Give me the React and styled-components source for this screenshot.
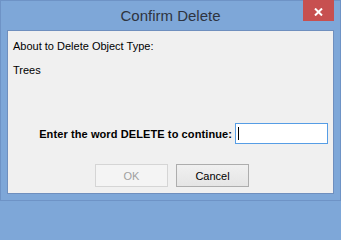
import React from 'react'
import styled, { createGlobalStyle } from 'styled-components'

const GlobalStyle = createGlobalStyle`
  html, body {
    margin: 0;
    padding: 0;
    background: #7ea7d8;
  }
  * {
    box-sizing: border-box;
  }
`

export default function App() {
  return (
    <>
      <GlobalStyle />
      <Window>
        <TitleBar>
          <Title>Confirm Delete</Title>
          <CloseButton>
            <svg width="9" height="8" viewBox="0 0 9 8">
              <path d="M1 0.5 L8 7.5 M8 0.5 L1 7.5" stroke="#ffffff" strokeWidth="2" />
            </svg>
          </CloseButton>
        </TitleBar>
        <Client>
          <Text>About to Delete Object Type:</Text>
          <Text $top={11}>Trees</Text>
          <ConfirmRow>
            <Label>Enter the word DELETE to continue:</Label>
            <InputBox>
              <Caret />
            </InputBox>
          </ConfirmRow>
          <ButtonRow>
            <Button disabled>OK</Button>
            <Button>Cancel</Button>
          </ButtonRow>
        </Client>
      </Window>
    </>
  )
}

const Window = styled.div`
  width: 341px;
  height: 201px;
  display: flex;
  flex-direction: column;
  background: #7ea7d8;
  border: 1px solid #6e93c6;
`

const TitleBar = styled.div`
  position: relative;
  height: 29px;
  display: flex;
  align-items: center;
  justify-content: center;
`

const Title = styled.div`
  font-family: "Liberation Sans", Arial, sans-serif;
  font-size: 15px;
  line-height: 29px;
  color: #2e3440;
`

const CloseButton = styled.div`
  position: absolute;
  top: -1px;
  right: 6px;
  width: 31px;
  height: 21px;
  background: #c75050;
  display: flex;
  justify-content: center;
  padding-top: 8px;
`

const Client = styled.div`
  flex: 1;
  margin: 0 6px 6px 6px;
  border: 1px solid #6f8fbe;
  background: #f0f0f0;
  display: flex;
  flex-direction: column;
  padding: 9px 5px 0 5px;
  font-family: "Liberation Sans", Arial, sans-serif;
  font-size: 11px;
  color: #000;
`

const Text = styled.div`
  line-height: 13px;
  margin-top: ${p => p.$top || 0}px;
`

const ConfirmRow = styled.div`
  margin-top: 46px;
  display: flex;
  align-items: center;
  justify-content: flex-end;
  gap: 3px;
`

const Label = styled.div`
  font-weight: bold;
  font-size: 11px;
  letter-spacing: 0.1px;
`

const InputBox = styled.div`
  width: 93px;
  height: 21px;
  background: #ffffff;
  border: 1px solid #569de5;
  display: flex;
  align-items: center;
  padding-left: 2px;
`

const Caret = styled.span`
  width: 1px;
  height: 13px;
  background: #000;
`

const ButtonRow = styled.div`
  margin-top: 20px;
  display: flex;
  justify-content: center;
  gap: 8px;
  padding-left: 3px;
`

const Button = styled.button`
  width: 73px;
  height: 23px;
  font-family: "Liberation Sans", Arial, sans-serif;
  font-size: 11px;
  padding: 0;
  color: ${p => (p.disabled ? '#a0a0a0' : '#000')};
  border: 1px solid ${p => (p.disabled ? '#d5d5d5' : '#adadad')};
  background: ${p => (p.disabled ? '#f4f4f4' : 'linear-gradient(#f0f0f0, #e5e5e5)')};
  border-radius: 0;
`
